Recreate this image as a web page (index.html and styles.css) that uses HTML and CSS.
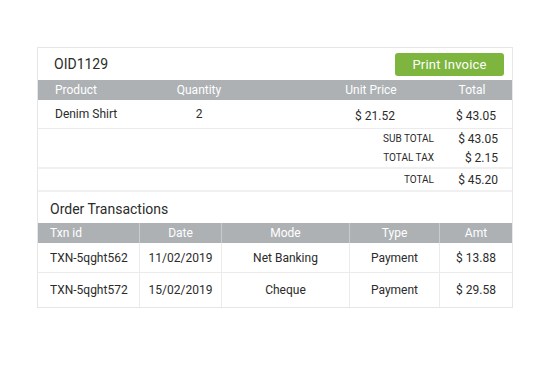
FILE: index.html
```html
<!DOCTYPE html>
<html lang="en">
<head>
  <meta charset="UTF-8" />
  <meta name="viewport" content="width=device-width, initial-scale=1.0" />
  <title>Order OID1129</title>
  <link rel="stylesheet" href="styles.css">
</head>
<body>
  <div class="card">
    <div class="card-head">
      <div class="order-id">OID1129</div>
      <button class="btn-print">Print Invoice</button>
    </div>

    <!-- Ordered items -->
    <div class="items">
      <div class="items-row items-head">
        <div class="c-product">Product</div>
        <div class="c-qty">Quantity</div>
        <div></div>
        <div class="c-price">Unit Price</div>
        <div class="c-total">Total</div>
      </div>
      <div class="items-row item">
        <div class="c-product">Denim Shirt</div>
        <div class="c-qty">2</div>
        <div></div>
        <div class="c-price val">$ 21.52</div>
        <div class="c-total val">$ 43.05</div>
      </div>
    </div>

    <div class="summary">
      <div class="sum-row"><span class="sum-label">SUB TOTAL</span><span class="sum-val">$ 43.05</span></div>
      <div class="sum-row"><span class="sum-label">TOTAL TAX</span><span class="sum-val">$ 2.15</span></div>
    </div>
    <div class="summary grand">
      <div class="sum-row"><span class="sum-label">TOTAL</span><span class="sum-val">$ 45.20</span></div>
    </div>

    <div class="section-title">Order Transactions</div>

    <div class="txns">
      <div class="txn-row txn-head">
        <div class="t-id">Txn id</div>
        <div>Date</div>
        <div>Mode</div>
        <div>Type</div>
        <div>Amt</div>
      </div>
      <div class="txn-row">
        <div class="t-id">TXN-5qght562</div>
        <div>11/02/2019</div>
        <div>Net Banking</div>
        <div>Payment</div>
        <div>$ 13.88</div>
      </div>
      <div class="txn-row last">
        <div class="t-id">TXN-5qght572</div>
        <div>15/02/2019</div>
        <div>Cheque</div>
        <div>Payment</div>
        <div>$ 29.58</div>
      </div>
    </div>
  </div>
</body>
</html>
```

FILE: styles.css
```css
* {
  box-sizing: border-box;
  margin: 0;
  padding: 0;
}

body {
  font-family: Roboto, "Liberation Sans", Arial, sans-serif;
  font-size: 12px;
  color: #2b2b2b;
  background: #fff;
  padding: 47px 0 0 37px;
}

.card {
  width: 476px;
  border: 1px solid #e6e6e6;
}

.card-head {
  height: 32px;
  display: flex;
  align-items: center;
  justify-content: space-between;
  padding: 0 8px 0 16px;
}

.order-id {
  font-size: 14px;
}

.btn-print {
  width: 109px;
  height: 23px;
  margin-top: 1px;
  border: none;
  border-radius: 3px;
  background: #7db53f;
  color: #fff;
  font-family: inherit;
  font-size: 13px;
  letter-spacing: 0.2px;
}

/* items table */
.items-row {
  display: grid;
  grid-template-columns: 122px 78px 72px 122px 1fr;
  align-items: center;
}

.items-head {
  height: 20px;
  background: #adb1b4;
  color: #fff;
}

.item {
  height: 29px;
  border-bottom: 1px solid #ebebeb;
}

.c-product {
  padding-left: 17px;
}

.c-qty,
.c-price,
.c-total {
  text-align: center;
}

.val {
  padding-left: 8px;
  padding-top: 3px;
}

/* totals */
.summary {
  border-bottom: 2px solid #f0f0f0;
}

.sum-row {
  height: 19px;
  display: flex;
  justify-content: flex-end;
  align-items: center;
}

.grand .sum-row {
  height: 21px;
}

.sum-label {
  font-size: 10px;
  text-align: right;
}

.sum-val {
  width: 78px;
  padding-right: 14px;
  text-align: right;
}

.section-title {
  height: 31px;
  display: flex;
  align-items: center;
  padding-left: 12px;
  padding-top: 3px;
  font-size: 14px;
}

/* transactions table */
.txn-row {
  display: grid;
  grid-template-columns: 101px 82px 128px 90px 1fr;
  height: 30px;
  border-bottom: 1px solid #ebebeb;
}

.txn-row > div {
  display: flex;
  align-items: center;
  justify-content: center;
  border-left: 1px solid #ebebeb;
}

.txn-row > div:first-child {
  border-left: none;
}

.txn-row .t-id {
  justify-content: flex-start;
  padding-left: 12px;
}

.txn-head {
  height: 20px;
  background: #adb1b4;
  color: #fff;
  border-bottom: none;
}

.txn-head > div {
  border-left-color: #c9cccf;
}

.txn-row.last {
  height: 34px;
  border-bottom: none;
}
```
